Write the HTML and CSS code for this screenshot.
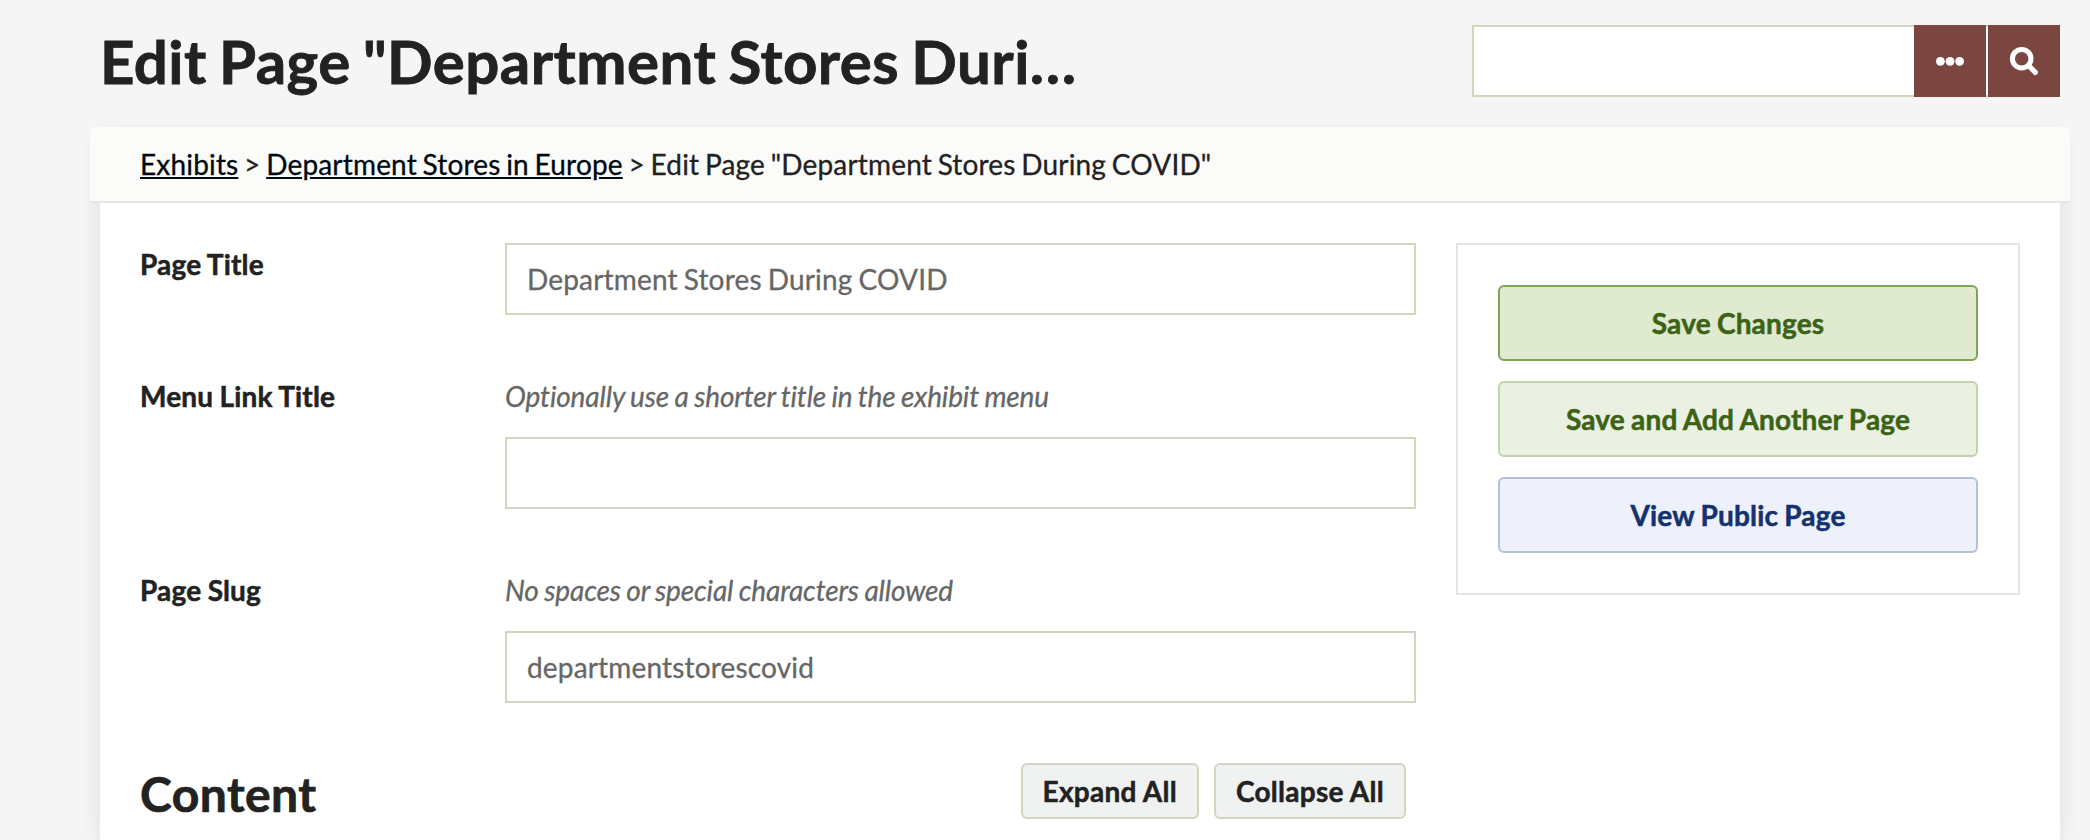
FILE: index.html
```html
<!DOCTYPE html>
<html lang="en">
<head>
<meta charset="utf-8">
<title>Edit Page</title>
<link rel="stylesheet" href="styles.css">
</head>
<body>
<header class="page-header">
  <h1 class="page-title">Edit Page "Department Stores Duri…</h1>
  <form class="search">
    <input class="search-input" type="text" aria-label="Search">
    <button class="search-button" type="button" aria-label="Options">
      <svg class="icon" width="28" height="28" viewBox="0 0 28 28"><circle cx="4.4" cy="14.3" r="4.4"/><circle cx="14" cy="14.3" r="4.4"/><circle cx="23.6" cy="14.3" r="4.4"/></svg>
    </button>
    <button class="search-button" type="button" aria-label="Search">
      <svg class="icon" width="30" height="30" viewBox="0 0 30 30"><circle class="lens" cx="12.7" cy="12.7" r="9.3"/><path class="handle" d="M20 20l6.3 6.3"/></svg>
    </button>
  </form>
</header>
<main class="content">
  <nav class="breadcrumb"><a href="#">Exhibits</a> &gt; <a href="#">Department Stores in Europe</a> &gt; Edit Page "Department Stores During COVID"</nav>
  <div class="columns">
    <section class="fields">
      <div class="field">
        <label class="label" for="title">Page Title</label>
        <div class="inputs"><input class="text" id="title" type="text" value="Department Stores During COVID"></div>
      </div>
      <div class="field">
        <label class="label" for="menu">Menu Link Title</label>
        <div class="inputs"><p class="hint">Optionally use a shorter title in the exhibit menu</p><input class="text" id="menu" type="text"></div>
      </div>
      <div class="field">
        <label class="label" for="slug">Page Slug</label>
        <div class="inputs"><p class="hint">No spaces or special characters allowed</p><input class="text" id="slug" type="text" value="departmentstorescovid"></div>
      </div>
      <div class="block-header">
        <h2 class="block-title">Content</h2>
        <div class="toggles"><button class="toggle" type="button">Expand All</button><button class="toggle" type="button">Collapse All</button></div>
      </div>
    </section>
    <aside class="save-panel">
      <button class="action save" type="button">Save Changes</button>
      <button class="action add" type="button">Save and Add Another Page</button>
      <button class="action view" type="button">View Public Page</button>
    </aside>
  </div>
</main>
</body>
</html>
```
FILE: styles.css
```css
* { box-sizing: border-box; }
body {
  margin: 0;
  height: 840px;
  padding: 0 30px 0 100px;
  background: #f5f5f5;
  color: #222;
  font: 28px/36px Lato, sans-serif;
  font-variant-ligatures: none;
  letter-spacing: .17px;
  word-spacing: -1.3px;
  -webkit-text-stroke: .3px;
}
input, button { font: inherit; letter-spacing: inherit; word-spacing: inherit; font-variant-ligatures: none; margin: 0; border-radius: 0; }
.page-header {
  display: flex;
  justify-content: space-between;
  height: 137px;
  padding-top: 25px;
}
.page-title {
  margin: 0;
  white-space: nowrap;
  font-size: 60px;
  line-height: 73px;
  font-weight: 700;
  letter-spacing: .45px;
  word-spacing: -2.8px;
  -webkit-text-stroke: .8px;
}
.search {
  display: flex;
  gap: 2px;
  width: 588px;
  height: 72px;
  background: linear-gradient(#d5d4c1 2px, #fff 2px 70px, #d5d4c1 70px);
}
.search-input {
  flex: 1;
  min-width: 0;
  margin-right: -2px;
  border: 2px solid #d5d4c1;
  border-right: 0;
  background: #fff;
}
.search-button {
  display: flex;
  align-items: center;
  justify-content: center;
  width: 72px;
  padding: 0;
  border: 0;
  background: #7b463f;
}
.icon { fill: #fff; }
.lens { fill: none; stroke: #fff; stroke-width: 5; }
.handle { fill: none; stroke: #fff; stroke-width: 5.2; stroke-linecap: round; }
.content {
  height: 703px;
  background: #fff;
  box-shadow: 0 0 20px rgba(0, 0, 0, .1), 0 0 0 transparent;
}
.breadcrumb {
  position: relative;
  top: -10px;
  height: 76px;
  margin: 0 -10px;
  padding: 19px 50px;
  border-bottom: 2px solid #e7e7e4;
  background: #fbfbf9;
  word-spacing: -1.65px;
}
.breadcrumb a { color: #000811; }
.columns {
  display: flex;
  align-items: flex-start;
  gap: 40px;
  padding: 30px 40px 0;
}
.fields { width: 1276px; }
.field { display: flex; margin-bottom: 60px; }
.label { width: 365px; padding-top: 3px; font-weight: 700; word-spacing: -.6px; -webkit-text-stroke: .5px; }
.inputs { flex: 1; }
.hint {
  margin: 0;
  height: 62px;
  padding-top: 3px;
  font-style: italic;
  color: #666;
  letter-spacing: -.12px;
  word-spacing: -1px;
}
.text {
  display: block;
  width: 100%;
  height: 72px;
  padding: 0 20px;
  border: 2px solid #d5d4c1;
  background: #fff;
  color: #666;
}
.block-header { display: flex; justify-content: space-between; height: 56px; padding-right: 10px; }
.block-title { margin: 0; font-size: 48px; line-height: 61px; font-weight: 700; letter-spacing: .45px; -webkit-text-stroke: .7px; }
.toggles { display: flex; gap: 15px; }
.toggle {
  height: 56px;
  padding: 0 20px;
  border: 2px solid #d5d4c1;
  border-radius: 6px;
  background: #f0f2f1;
  color: #222;
  font-weight: 700;
  letter-spacing: .27px;
  word-spacing: 0;
  -webkit-text-stroke: .5px;
}
.save-panel {
  display: grid;
  gap: 20px;
  width: 564px;
  padding: 40px;
  border: 2px solid #e5e6e0;
}
.action { height: 76px; border: 2px solid; border-radius: 6px; font-weight: 700; word-spacing: -.8px; -webkit-text-stroke: .5px; }
.save { color: #3c6315; background: #e0ead1; border-color: #80a453; }
.add { color: #3c6315; background: #ebf1e2; border-color: #c1d3aa; }
.view { color: #14326f; background: #eef1f9; border-color: #b2c0da; }
```
